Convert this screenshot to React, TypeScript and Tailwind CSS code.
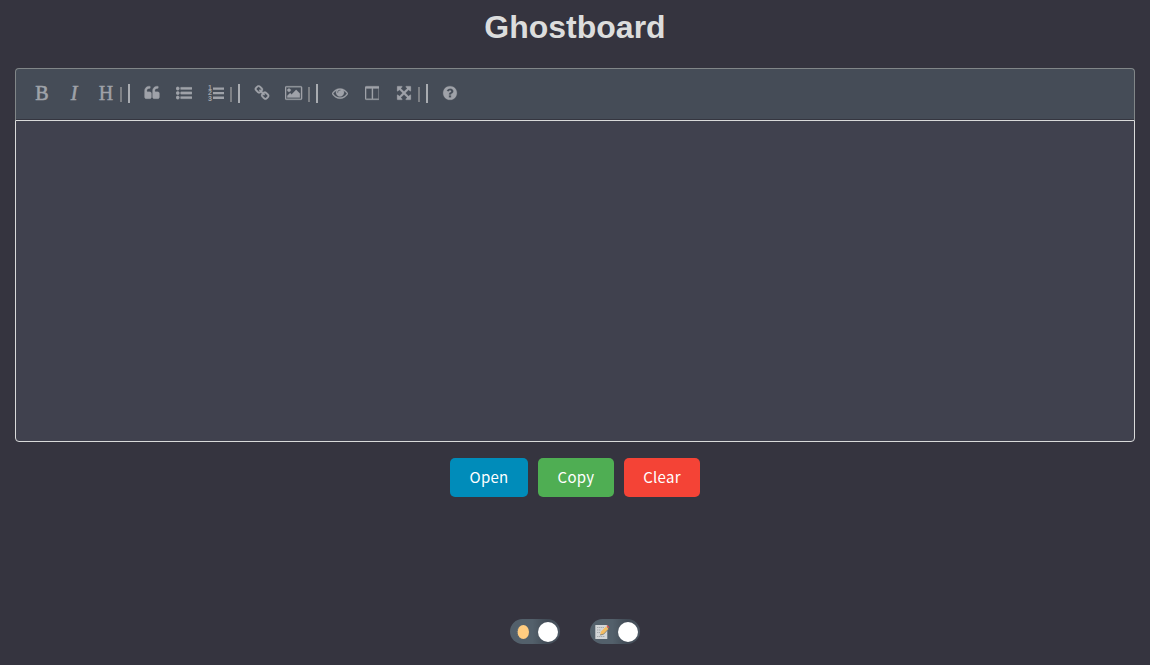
import type { ReactNode } from "react";

function Glyph({ d, w = 1792 }: { d: string; w?: number }) {
  return (
    <svg viewBox={`0 0 ${w} 1792`} style={{ width: (w * 16) / 1792 }} className="h-4 shrink-0 fill-current stroke-current stroke-[30]">
      <path d={d} />
    </svg>
  );
}

const quote =
  "M832 960v384q0 80-56 136t-136 56h-384q-80 0-136-56t-56-136v-704q0-104 40.5-198.5t109.5-163.5 163.5-109.5 198.5-40.5h64q26 0 45 19t19 45v128q0 26-19 45t-45 19h-64q-106 0-181 75t-75 181v32q0 40 28 68t68 28h224q80 0 136 56t56 136zm896 0v384q0 80-56 136t-136 56h-384q-80 0-136-56t-56-136v-704q0-104 40.5-198.5t109.5-163.5 163.5-109.5 198.5-40.5h64q26 0 45 19t19 45v128q0 26-19 45t-45 19h-64q-106 0-181 75t-75 181v32q0 40 28 68t68 28h224q80 0 136 56t56 136z";
const listUl =
  "M384 1408q0 80-56 136t-136 56-136-56-56-136 56-136 136-56 136 56 56 136zm0-512q0 80-56 136t-136 56-136-56-56-136 56-136 136-56 136 56 56 136zm1408 416v192q0 13-9.5 22.5t-22.5 9.5h-1216q-13 0-22.5-9.5t-9.5-22.5v-192q0-13 9.5-22.5t22.5-9.5h1216q13 0 22.5 9.5t9.5 22.5zm-1408-928q0 80-56 136t-136 56-136-56-56-136 56-136 136-56 136 56 56 136zm1408 416v192q0 13-9.5 22.5t-22.5 9.5h-1216q-13 0-22.5-9.5t-9.5-22.5v-192q0-13 9.5-22.5t22.5-9.5h1216q13 0 22.5 9.5t9.5 22.5zm0-512v192q0 13-9.5 22.5t-22.5 9.5h-1216q-13 0-22.5-9.5t-9.5-22.5v-192q0-13 9.5-22.5t22.5-9.5h1216q13 0 22.5 9.5t9.5 22.5z";
const link =
  "M1520 1216q0-40-28-68l-208-208q-28-28-68-28-42 0-72 32 3 3 19 18.5t21.5 21.5 15 19 13 25.5 3.5 27.5q0 40-28 68t-68 28q-15 0-27.5-3.5t-25.5-13-19-15-21.5-21.5-18.5-19q-33 31-33 73 0 40 28 68l206 207q27 27 68 27 40 0 68-26l147-146q28-28 28-67zm-703-705q0-40-28-68l-206-207q-28-28-68-28-39 0-68 27l-147 146q-28 28-28 67 0 40 28 68l208 208q27 27 68 27 42 0 72-31-3-3-19-18.5t-21.5-21.5-15-19-13-25.5-3.5-27.5q0-40 28-68t68-28q15 0 27.5 3.5t25.5 13 19 15 21.5 21.5 18.5 19q33-31 33-73zm895 705q0 120-85 203l-147 146q-83 83-203 83-121 0-204-85l-206-207q-83-83-83-203 0-123 88-209l-88-88q-86 88-208 88-120 0-204-84l-208-208q-84-84-84-204t85-203l147-146q83-83 203-83 121 0 204 85l206 207q83 83 83 203 0 123-88 209l88 88q86-88 208-88 120 0 204 84l208 208q84 84 84 204z";
const picture =
  "M640 576q0 80-56 136t-136 56-136-56-56-136 56-136 136-56 136 56 56 136zm1024 384v448h-1408v-192l320-320 160 160 512-512zm96-704h-1600q-13 0-22.5 9.5t-9.5 22.5v1216q0 13 9.5 22.5t22.5 9.5h1600q13 0 22.5-9.5t9.5-22.5v-1216q0-13-9.5-22.5t-22.5-9.5zm160 32v1216q0 66-47 113t-113 47h-1600q-66 0-113-47t-47-113v-1216q0-66 47-113t113-47h1600q66 0 113 47t47 113z";
const eye =
  "M1664 960q-152-236-381-353 61 104 61 225 0 185-131.5 316.5t-316.5 131.5-316.5-131.5-131.5-316.5q0-121 61-225-229 117-381 353 133 205 333.5 326.5t434.5 121.5 434.5-121.5 333.5-326.5zm-720-384q0-20-14-34t-34-14q-125 0-214.5 89.5t-89.5 214.5q0 20 14 34t34 14 34-14 14-34q0-86 61-147t147-61q20 0 34-14t14-34zm848 384q0 34-20 69-140 230-376.5 368.5t-499.5 138.5-499.5-139-376.5-368q-20-35-20-69t20-69q140-229 376.5-368t499.5-139 499.5 139 376.5 368q20 35 20 69z";
const columns =
  "M160 1536h608v-1152h-640v1120q0 13 9.5 22.5t22.5 9.5zm1376-32v-1120h-640v1152h608q13 0 22.5-9.5t9.5-22.5zm128-1216v1216q0 66-47 113t-113 47h-1344q-66 0-113-47t-47-113v-1216q0-66 47-113t113-47h1344q66 0 113 47t47 113z";
const arrows =
  "M1411 541l-355 355 355 355 144-144q29-31 70-14 39 17 39 59v448q0 26-19 45t-45 19h-448q-42 0-59-40-17-39 14-69l144-144-355-355-355 355 144 144q31 30 14 69-17 40-59 40h-448q-26 0-45-19t-19-45v-448q0-42 40-59 39-17 69 14l144 144 355-355-355-355-144 144q-19 19-45 19-12 0-24-5-40-17-40-59v-448q0-26 19-45t45-19h448q42 0 59 40 17 39-14 69l-144 144 355 355 355-355-144-144q-31-30-14-69 17-40 59-40h448q26 0 45 19t19 45v448q0 42-39 59-13 5-25 5-26 0-45-19z";
const help =
  "M1024 1376v-192q0-14-9-23t-23-9h-192q-14 0-23 9t-9 23v192q0 14 9 23t23 9h192q14 0 23-9t9-23zm256-672q0-88-55.5-163t-138.5-116-170-41q-243 0-371 213-15 24 8 42l132 100q7 6 19 6 16 0 25-12 53-68 86-92 34-24 86-24 48 0 85.5 26t37.5 59q0 38-20 61t-68 45q-63 28-115.5 86.5t-52.5 125.5v36q0 14 9 23t23 9h192q14 0 23-9t9-23q0-19 21.5-49.5t54.5-49.5q32-18 49-28.5t46-35 44.5-48 28-60.5 12.5-81zm384 192q0 209-103 385.5t-279.5 279.5-385.5 103-385.5-103-279.5-279.5-103-385.5 103-385.5 279.5-279.5 385.5-103 385.5 103 279.5 279.5 103 385.5z";

function Tool({ label, children }: { label: string; children: ReactNode }) {
  return (
    <button aria-label={label} className="flex h-[30px] w-8 items-center justify-center">
      {children}
    </button>
  );
}

function Separator() {
  return (
    <span className="-ml-0.5 flex w-4 items-center gap-1.5">
      <span className="mt-0.5 h-[15px] w-0.5 bg-[#7d8085]" />
      <span className="h-[19px] w-0.5 bg-[#a9acb1]" />
    </span>
  );
}

function NumberedList() {
  return (
    <span className="flex h-[17px] w-4 gap-px">
      <span className="flex w-[4px] flex-col font-['Liberation_Sans'] text-[7px] leading-[5.7px] font-bold">
        <span>1</span>
        <span>2</span>
        <span>3</span>
      </span>
      <svg viewBox="0 0 11 17" className="h-[17px] w-[11px] fill-current">
        <path d="M0 2.5h11v2.3H0zM0 7h11v2.3H0zM0 11.6h11v2.3H0z" />
      </svg>
    </span>
  );
}

function Switch({ label, children }: { label: string; children: ReactNode }) {
  return (
    <button
      role="switch"
      aria-checked="true"
      aria-label={label}
      className="flex h-[25px] w-[50px] items-center justify-between rounded-full bg-[linear-gradient(90deg,#53606b_45%,#414a55_75%,#4b5662)] pr-0.5 pl-[5px]"
    >
      {children}
      <span className="size-5 rounded-full bg-white" />
    </button>
  );
}

export default function App() {
  return (
    <div className="flex h-[665px] flex-col items-center bg-[#35343f] px-[15px]">
      <h1 className="mt-2 h-[60px] font-['Liberation_Sans',sans-serif] text-[32px] leading-[38px] font-bold text-[#dcdddd]">
        Ghostboard
      </h1>
      <main className="w-full">
        <div className="flex h-[52px] items-start rounded-t border border-b-0 border-[#818688] bg-[#454c57] pt-[9px] pl-2.5 text-[#9fa2a9] shadow-[inset_0_-1px_0_#353640]">
          <Tool label="Bold">
            <span className="font-['Liberation_Serif',serif] text-[20px] leading-[30px] [-webkit-text-stroke:0.6px_currentColor]">B</span>
          </Tool>
          <Tool label="Italic">
            <span className="font-['Liberation_Serif',serif] text-[20px] leading-[30px] italic [-webkit-text-stroke:0.6px_currentColor]">I</span>
          </Tool>
          <Tool label="Heading">
            <span className="font-['Liberation_Serif',serif] text-[20px] leading-[30px] [-webkit-text-stroke:0.4px_currentColor]">H</span>
          </Tool>
          <div className="flex h-[30px] items-center"><Separator /></div>
          <Tool label="Quote"><Glyph d={quote} /></Tool>
          <Tool label="Bulleted list"><Glyph d={listUl} /></Tool>
          <Tool label="Numbered list"><NumberedList /></Tool>
          <div className="flex h-[30px] items-center"><Separator /></div>
          <Tool label="Link"><Glyph d={link} /></Tool>
          <Tool label="Image"><Glyph d={picture} w={1920} /></Tool>
          <div className="flex h-[30px] items-center"><Separator /></div>
          <Tool label="Preview"><Glyph d={eye} /></Tool>
          <Tool label="Side by side"><Glyph d={columns} w={1664} /></Tool>
          <Tool label="Fullscreen"><Glyph d={arrows} /></Tool>
          <div className="flex h-[30px] items-center"><Separator /></div>
          <Tool label="Guide"><Glyph d={help} /></Tool>
        </div>
        <div className="h-[322px] rounded-b border border-[#d9dada] bg-[#40414e]" />
      </main>
      <div className="mt-4 flex gap-2.5 font-['Noto_Sans_CJK_SC',sans-serif] text-[15px] leading-[38px] tracking-[0.3px] text-white">
        <button className="h-[39px] w-[78px] rounded-[5px] bg-[#008cba] pb-px">Open</button>
        <button className="h-[39px] w-[76px] rounded-[5px] bg-[#4fae53] pb-px">Copy</button>
        <button className="h-[39px] w-[76px] rounded-[5px] bg-[#f44336] pb-px">Clear</button>
      </div>
      <div className="mt-auto mb-[21px] flex gap-[30px]">
        <Switch label="Dark theme">
          <svg viewBox="0 0 16 16" className="size-4">
            <ellipse cx="6.7" cy="8" rx="4.5" ry="6" fill="none" stroke="#89908f" strokeWidth="0.6" strokeDasharray="1 1" />
            <ellipse cx="8.3" cy="8" rx="5.7" ry="7" fill="#ffcc80" />
          </svg>
        </Switch>
        <Switch label="Notes">
          <svg viewBox="0 0 16 16" className="size-4">
            <rect x="0.3" y="1" width="12" height="14" rx="0.5" fill="#d3d6d8" />
            <path d="M2 3.5h7M2 6h4M2 8.5h3M2 12.5h8" stroke="#9a9fa3" strokeWidth="0.8" strokeDasharray="1.4 0.6" />
            <path d="M5 11 6 7.6l5-5.2 2.6 2.6-5 5.2z" fill="#f5bd62" />
            <path d="m5 11 3.6-.8 4.6-4.8" fill="none" stroke="#546069" strokeWidth="0.6" />
            <path d="m11.4 2 .9-.8 2 2-.7.9z" fill="#ed504b" />
          </svg>
        </Switch>
      </div>
    </div>
  );
}
